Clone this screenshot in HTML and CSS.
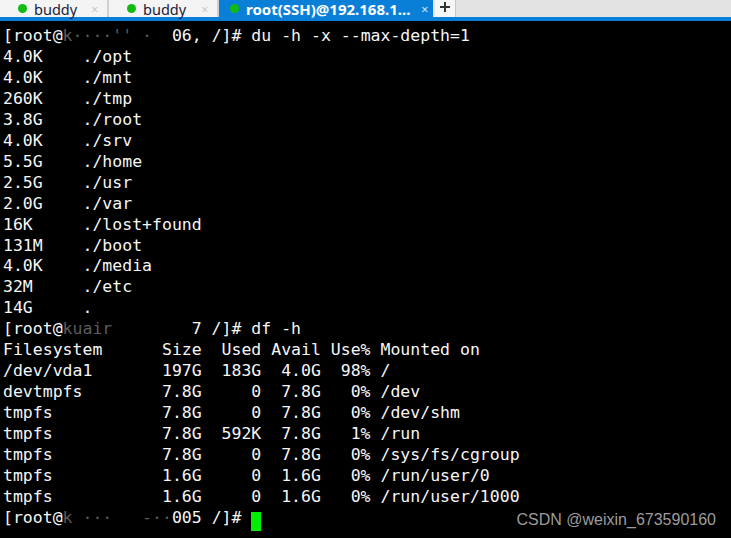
FILE: index.html
```
<!DOCTYPE html>
<html>
<head>
    <title>root(SSH)@192.168.1...</title>
    <link rel="stylesheet" href="styles.css">
</head>
<body>
    <div class="window">
        <div class="tab-bar">
            <div class="tab">
                <span class="dot"></span>
                <span class="tab-title">buddy</span>
                <span class="tab-close">&times;</span>
            </div>
            <div class="tab">
                <span class="dot"></span>
                <span class="tab-title">buddy</span>
                <span class="tab-close">&times;</span>
            </div>
            <div class="tab active">
                <span class="dot"></span>
                <span class="tab-title">root(SSH)@192.168.1...</span>
                <span class="tab-close">&times;</span>
            </div>
            <div class="new-tab">
                <svg width="10" height="10" viewBox="0 0 10 10">
                    <path d="M5 0v10M0 5h10" stroke="#333" stroke-width="2"/>
                </svg>
            </div>
        </div>

        <div class="terminal">
<pre class="output">[root@<span class="mask">k&middot;&middot;&middot;&middot;&#39;&#39; &middot;  </span>06, /]# du -h -x --max-depth=1
4.0K    ./opt
4.0K    ./mnt
260K    ./tmp
3.8G    ./root
4.0K    ./srv
5.5G    ./home
2.5G    ./usr
2.0G    ./var
16K     ./lost+found
131M    ./boot
4.0K    ./media
32M     ./etc
14G     .
[root@<span class="mask">kuair        </span>7 /]# df -h
Filesystem      Size  Used Avail Use% Mounted on
/dev/vda1       197G  183G  4.0G  98% /
devtmpfs        7.8G     0  7.8G   0% /dev
tmpfs           7.8G     0  7.8G   0% /dev/shm
tmpfs           7.8G  592K  7.8G   1% /run
tmpfs           7.8G     0  7.8G   0% /sys/fs/cgroup
tmpfs           1.6G     0  1.6G   0% /run/user/0
tmpfs           1.6G     0  1.6G   0% /run/user/1000
[root@<span class="mask">k &middot;&middot;&middot;   -&middot;&middot;</span>005 /]# <span class="cursor"> </span></pre>
            <div class="watermark">CSDN @weixin_673590160</div>
        </div>
    </div>
</body>
</html>
```

FILE: styles.css
```
body {
    margin: 0;
    padding: 0;
    background-color: #000000;
}

.window {
    width: 731px;
    height: 538px;
    display: flex;
    flex-direction: column;
    overflow: hidden;
}

.tab-bar {
    display: flex;
    height: 17px;
    background-color: #e3e3e3;
    border-bottom: 4px solid #0a7fd8;
    font-family: "Noto Sans", "Open Sans", sans-serif;
    font-size: 14.5px;
}

.tab {
    width: 110px;
    display: flex;
    align-items: center;
    padding-left: 18px;
    box-sizing: border-box;
    background-color: #f4f4f4;
    border-right: 2px solid #cfcfcf;
    color: #1b1b3a;
}

.tab:first-child {
    width: 109px;
}

.tab.active {
    width: 214px;
    padding-left: 8px;
    background-color: #0a7fd8;
    border-right: none;
    color: #ffffff;
    font-weight: bold;
    font-size: 15px;
}

.dot {
    flex: none;
    width: 9px;
    height: 9px;
    border-radius: 50%;
    background-color: #11bb11;
    margin-right: 7px;
}

.tab.active .dot {
    margin-left: 3px;
}

.tab-title {
    flex: 1;
    white-space: nowrap;
}

.tab-close {
    width: 16px;
    color: #c9c9c9;
    font-size: 13px;
    font-weight: normal;
}

.tab.active .tab-close {
    width: 12px;
    color: #cfe3f5;
}

.new-tab {
    width: 21px;
    margin-left: 2px;
    display: flex;
    align-items: center;
    justify-content: center;
    padding-bottom: 3px;
    box-sizing: border-box;
    background-color: #f6f6f6;
    border-right: 1px solid #c6c6c6;
}

.terminal {
    flex: 1;
    position: relative;
    background-color: #000000;
}

.output {
    margin: 0;
    padding: 5px 0 0 3px;
    font-family: "DejaVu Sans Mono", "Liberation Mono", monospace;
    font-size: 16.5px;
    line-height: 20.96px;
    color: #f6f6f6;
}

.mask {
    color: #5c5c5c;
}

.cursor {
    display: inline-block;
    width: 10px;
    height: 19px;
    vertical-align: -4px;
    background-color: #00ee00;
}

.watermark {
    position: absolute;
    right: 15px;
    bottom: 9px;
    font-family: "Liberation Sans", Arial, sans-serif;
    font-size: 16px;
    color: #9c9c9c;
}
```
